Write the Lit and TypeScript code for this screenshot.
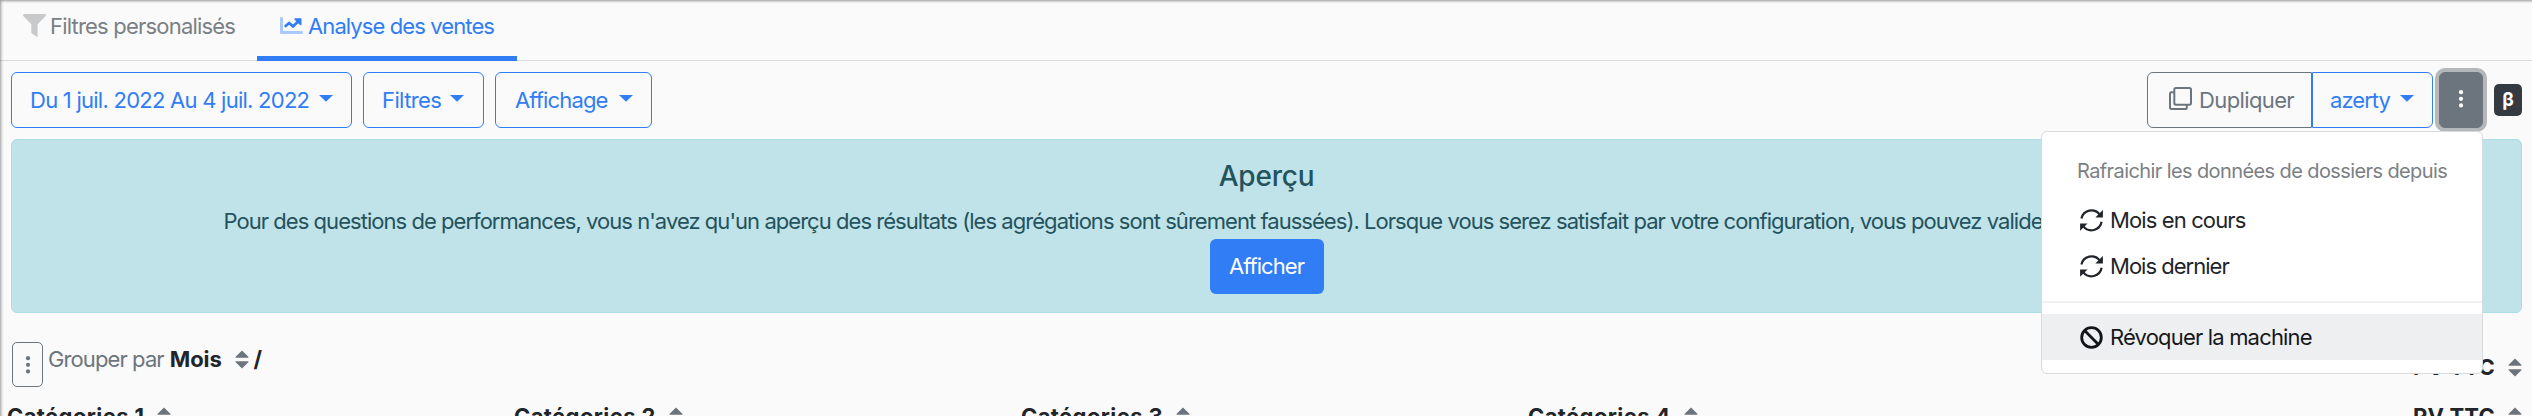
import { LitElement, html, css, svg } from "lit";
import { customElement, property } from "lit/decorators.js";

const ICONS: Record<string, unknown> = {
  funnel: svg`<svg width="23" height="23" viewBox="0 0 23 23"><path fill="#c8c9ca" d="M0.6 0H22.4Q23.4 1 22.5 2.2L14.6 10.3V22Q14.4 23 13.2 22.4L9 19.4Q8.3 18.8 8.3 18V10.3L0.5 2.2Q-0.4 1 0.6 0Z"/></svg>`,
  chart: svg`<svg width="23" height="17" viewBox="0 0 23 17"><path fill="#acc9fb" d="M0 1Q0 0 1.5 0T3 1V14H22Q23 14 23 15.5T22 17H1Q0 17 0 16Z"/><path fill="none" stroke="#307df6" stroke-width="2.7" stroke-linejoin="round" stroke-linecap="round" d="M5.6 9L9.2 6L13 9.5L18.6 4"/><path fill="#307df6" d="M14.8 1.2H20.8Q21.5 1.2 21.5 2V7.8Q21 8.8 20 8L14.6 2.8Q14 1.6 14.8 1.2Z"/></svg>`,
  clone: svg`<svg width="23" height="23" viewBox="0 0 23 23" fill="none" stroke="#6c757d" stroke-width="2"><rect x="5.3" y="1" width="16.7" height="16.7" rx="1.6"/><path d="M5 5.2H2.6Q1 5.2 1 6.8V20.3Q1 22 2.6 22H16.2Q17.8 22 17.8 20.4V18"/></svg>`,
  sync: svg`<svg width="23" height="23" viewBox="0 0 23 23"><g fill="none" stroke="#212529" stroke-width="2.2"><path d="M1.4 9.6A10.3 10.3 0 0 1 19.6 5.4"/><path d="M21.6 12.8A10.3 10.3 0 0 1 3.4 17.4"/></g><path fill="#212529" d="M22.9 1V8.4H15.4L17.8 6L20.6 3.3Z M0.1 21.8V14.4H7.6L5.2 16.8L2.4 19.5Z"/></svg>`,
  ban: svg`<svg width="23" height="23" viewBox="0 0 23 23" fill="none" stroke="#111418" stroke-width="2.8"><circle cx="11.5" cy="11.5" r="9.8"/><path d="M4.6 4.6L18.4 18.4"/></svg>`,
  caret: svg`<svg width="14" height="7" viewBox="0 0 14 7"><path fill="currentColor" d="M0 0H14L7 6.8Z"/></svg>`,
  sort: svg`<svg width="14" height="19" viewBox="0 0 14 19"><path fill="#6c757d" d="M7 0.4L13.6 7Q13.6 7.8 13 7.8H1Q0.4 7.8 0.4 7Z M7 18.6L13.6 12Q13.6 11.2 13 11.2H1Q0.4 11.2 0.4 12Z"/></svg>`,
  dots: svg`<svg width="6" height="20" viewBox="0 0 6 20" fill="currentColor"><circle cx="3" cy="3.2" r="2.1"/><circle cx="3" cy="9.8" r="2.1"/><circle cx="3" cy="16.4" r="2.1"/></svg>`,
};

@customElement("ui-icon")
export class UiIcon extends LitElement {
  @property() name = "";
  static styles = css`
    :host { display: inline-flex; flex: none; }
    svg { display: block; }
  `;
  render() {
    return html`${ICONS[this.name]}`;
  }
}

@customElement("app-root")
export class AppRoot extends LitElement {
  static styles = css`
    :host {
      display: block; position: relative; height: 416px; overflow: hidden;
      background: #fafafa; color: #212529;
      font: 400 22px/34px Inter, "Liberation Sans", sans-serif; white-space: nowrap;
    }
    :host::after {
      content: ""; position: absolute; inset: 0; pointer-events: none;
      box-shadow: inset 2px 2px 3px -1px rgba(0, 0, 0, 0.4);
    }
    * { box-sizing: border-box; }
    .tabs { display: flex; height: 61px; border-bottom: 1px solid #d9dbde; }
    .tab { display: flex; height: 61px; padding: 9px 0 0 23px; color: #7b8084; letter-spacing: -0.8px; }
    .tab.first { width: 257px; }
    .tab.active { width: 260px; color: #307df6; border-bottom: 5px solid #307df6; letter-spacing: -0.9px; }
    .tab ui-icon { margin: 5px 4px 0 0; }
    .tab.active ui-icon { margin: 8px 5px 0 0; }

    .toolbar { display: flex; justify-content: space-between; height: 78px; padding: 11px 10px 0 11px; }
    .left, .right { display: flex; }
    .left { gap: 11px; }
    .btn {
      display: flex; height: 56px; padding: 10px 0 10px 17px; flex: none;
      border: 1px solid #307df6; border-radius: 6px; color: #307df6;
    }
    .btn > ui-icon[name="caret"] { margin: 12px 0 0 auto; }
    .period { width: 341px; padding-right: 18px; padding-left: 18px; letter-spacing: -0.75px; }
    .filters { width: 121px; padding-right: 19px; padding-left: 18px; letter-spacing: -0.6px; }
    .display { width: 157px; padding-right: 18px; padding-left: 19px; letter-spacing: -0.85px; }
    .dup { width: 165px; padding-left: 21px; border-color: #6c757d; color: #6c757d; border-radius: 6px 0 0 6px; letter-spacing: -0.62px; }
    .dup ui-icon { margin: 4px 7px 0 0; }
    .user { width: 121px; padding-right: 18px; border-radius: 0 6px 6px 0; letter-spacing: -0.95px; }
    .more {
      width: 44px; margin-left: 6px; padding: 0; justify-content: center; align-items: flex-start;
      padding-top: 16px; background: #6c757d; border-color: #6c757d; color: #fff; box-shadow: 0 0 0 4px #b5b8ba;
    }
    .beta {
      width: 28px; height: 32px; margin: 12px 0 0 11px; border-radius: 5px; background: #343a40; color: #fff;
      font-weight: 700; font-size: 19px; line-height: 31px; text-align: center;
    }

    .alert {
      height: 174px; margin: 0 10px 0 11px; padding-top: 19px; text-align: center;
      background: #bfe3e8; border: 1px solid #abdde5; border-radius: 6px; color: #24525d;
    }
    .title { font-size: 28px; font-weight: 500; letter-spacing: -0.2px; line-height: 34px; }
    .message { margin-top: 11px; padding-left: 211.5px; text-align: left; letter-spacing: -0.958px; overflow: hidden; }
    .show {
      width: 114px; height: 55px; margin: 1px auto 0; border-radius: 6px; background: #307df6; color: #fff;
      line-height: 54px; letter-spacing: -0.95px;
    }

    .group { display: flex; height: 86px; padding: 29px 10px 0 12px; }
    .gbtn {
      display: flex; justify-content: center; width: 31px; height: 45px; padding-top: 12px;
      border: 1px solid #6c757d; border-radius: 5px; color: #6c757d;
    }
    .by { margin-left: 5px; color: #6c757d; letter-spacing: -0.9px; }
    .bold { font-weight: 700; }
    .month { margin-left: 6px; letter-spacing: -0.1px; }
    .month + ui-icon { margin: 8px 5px 0 13px; }
    .total { display: flex; margin: 8px 0 0 auto; letter-spacing: 0.2px; }
    .total ui-icon { margin: 8px 0 0 13px; }

    .heads { display: flex; padding: 0 10px 0 7px; }
    .cat { display: flex; width: 507px; letter-spacing: 0.4px; }
    .cat ui-icon { margin: 8px 0 0 13px; }
    .heads .total { margin-top: 0; }

    .menu {
      position: absolute; left: 2041px; top: 131px; width: 442px; height: 243px; padding-top: 22px;
      background: #fff; border: 1px solid #d9dadb; border-radius: 6px;
    }
    .mhead { height: 43px; padding-left: 35px; font-size: 20px; letter-spacing: -0.6px; color: #7b8084; }
    .item { display: flex; height: 46px; padding: 6px 0 0 38px; letter-spacing: -0.88px; }
    .item ui-icon { margin: 6px 7px 0 0; }
    .item.last { letter-spacing: -0.99px; }
    .item.hover { background: #eeeff1; color: #16181b; letter-spacing: -0.82px; }
    .divider { height: 2px; margin: 12px 0 11px; background: #eff0f2; }
  `;

  private categories = ["Catégories 1", "Catégories 2", "Catégories 3", "Catégories 4"];

  render() {
    return html`
      <nav class="tabs">
        <div class="tab first"><ui-icon name="funnel"></ui-icon><span>Filtres personalisés</span></div>
        <div class="tab active"><ui-icon name="chart"></ui-icon><span>Analyse des ventes</span></div>
      </nav>
      <div class="toolbar">
        <div class="left">
          <div class="btn period"><span>Du 1 juil. 2022 Au 4 juil. 2022</span><ui-icon name="caret"></ui-icon></div>
          <div class="btn filters"><span>Filtres</span><ui-icon name="caret"></ui-icon></div>
          <div class="btn display"><span>Affichage</span><ui-icon name="caret"></ui-icon></div>
        </div>
        <div class="right">
          <div class="btn dup"><ui-icon name="clone"></ui-icon><span>Dupliquer</span></div>
          <div class="btn user"><span>azerty</span><ui-icon name="caret"></ui-icon></div>
          <div class="btn more"><ui-icon name="dots"></ui-icon></div>
          <div class="beta">β</div>
        </div>
      </div>
      <section class="alert">
        <div class="title">Aperçu</div>
        <div class="message">Pour des questions de performances, vous n'avez qu'un aperçu des résultats (les agrégations sont sûrement faussées). Lorsque vous serez satisfait par votre configuration, vous pouvez valide</div>
        <div class="show">Afficher</div>
      </section>
      <div class="group">
        <div class="gbtn"><ui-icon name="dots"></ui-icon></div>
        <span class="by">Grouper par</span>
        <span class="bold month">Mois</span><ui-icon name="sort"></ui-icon><span class="bold">/</span>
        <div class="bold total"><span>PV TTC</span><ui-icon name="sort"></ui-icon></div>
      </div>
      <div class="bold heads">
        ${this.categories.map((c) => html`<div class="cat"><span>${c}</span><ui-icon name="sort"></ui-icon></div>`)}
        <div class="total"><span>PV TTC</span><ui-icon name="sort"></ui-icon></div>
      </div>
      <div class="menu">
        <div class="mhead">Rafraichir les données de dossiers depuis</div>
        <div class="item"><ui-icon name="sync"></ui-icon><span>Mois en cours</span></div>
        <div class="item last"><ui-icon name="sync"></ui-icon><span>Mois dernier</span></div>
        <div class="divider"></div>
        <div class="item hover"><ui-icon name="ban"></ui-icon><span>Révoquer la machine</span></div>
      </div>
    `;
  }
}
